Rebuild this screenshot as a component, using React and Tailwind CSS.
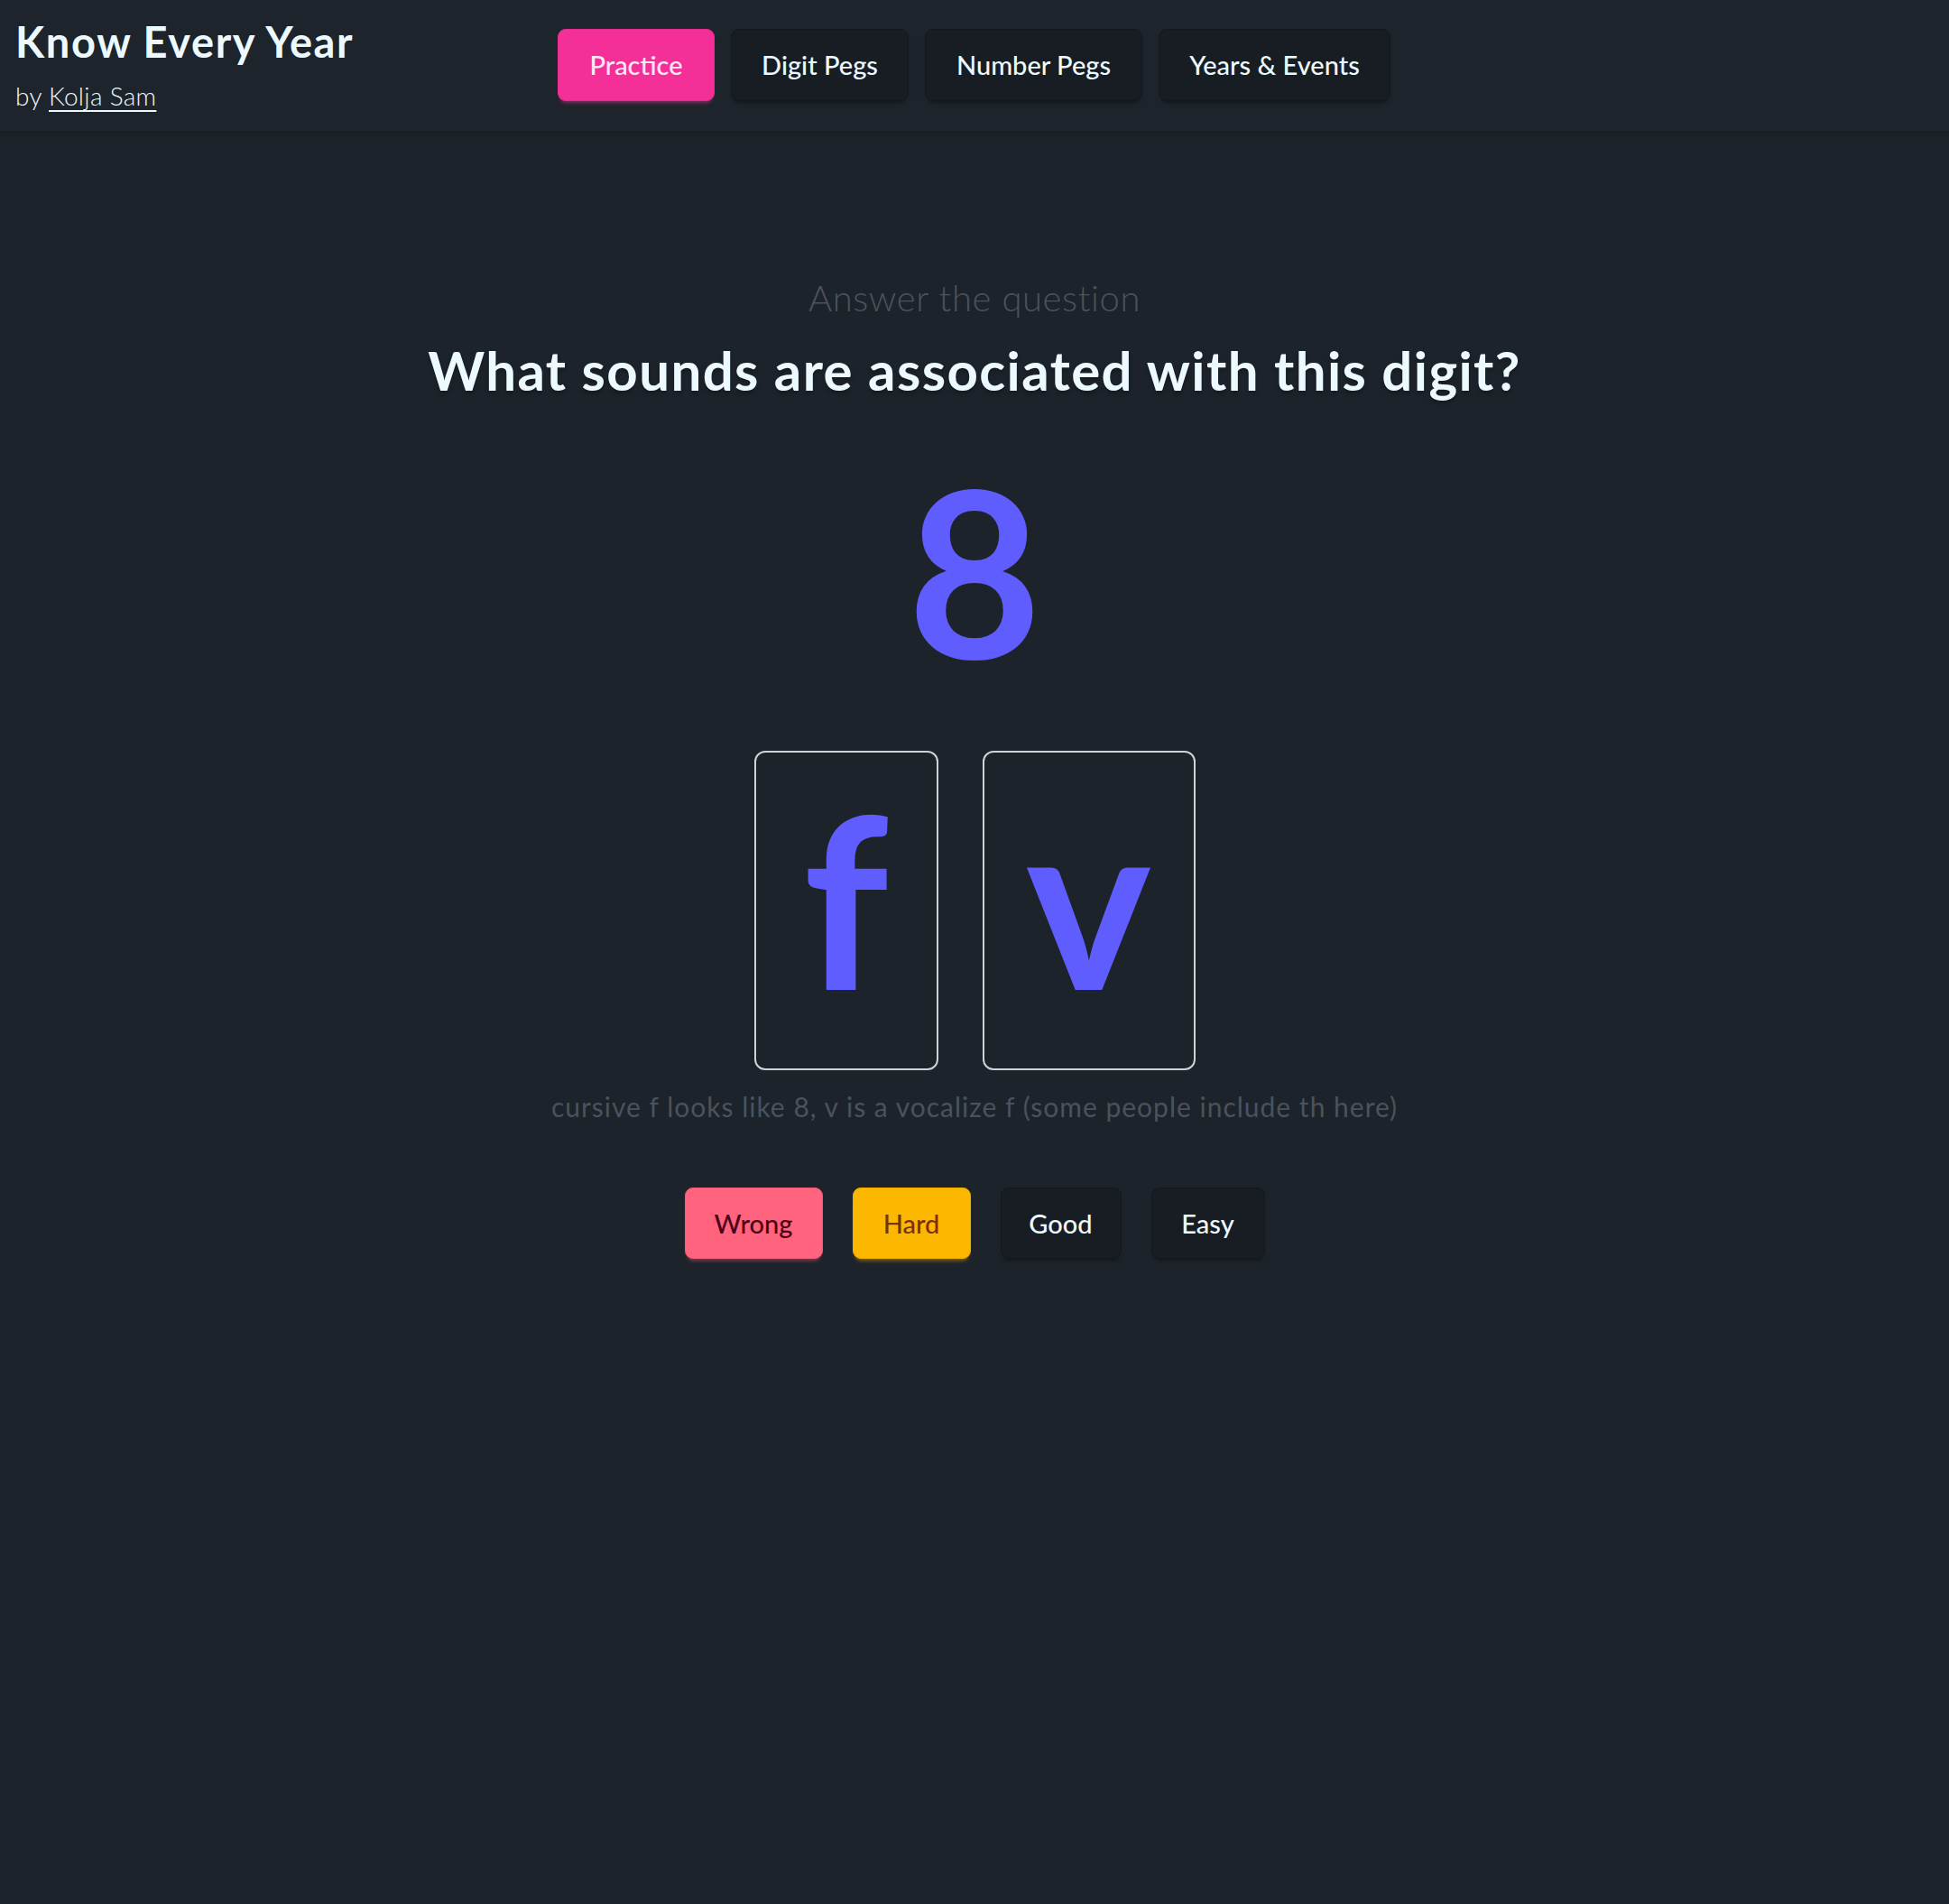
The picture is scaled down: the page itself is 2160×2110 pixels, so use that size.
import React from "react";

const navItems = [
  { label: "Practice", width: "w-[174px]", active: true },
  { label: "Digit Pegs", width: "w-[197px]" },
  { label: "Number Pegs", width: "w-[241px]" },
  { label: "Years & Events", width: "w-[257px]" },
];

const sounds = [
  { letter: "f", width: "w-[204px]" },
  { letter: "v", width: "w-[236px]" },
];

const ratings = [
  {
    label: "Wrong",
    className:
      "w-[153px] bg-[#ff637d] text-[#4d0218] border-[#f25e77] shadow-[0_5px_4px_-3px_rgba(255,99,125,0.45)]",
  },
  {
    label: "Hard",
    className:
      "w-[131px] bg-[#fcb700] text-[#793205] border-[#efae00] shadow-[0_5px_4px_-3px_rgba(252,183,0,0.45)]",
  },
  {
    label: "Good",
    className:
      "w-[134px] bg-[#181d23] text-[#ecf9ff] border-[#14181d] shadow-[0_5px_4px_-3px_rgba(0,0,0,0.35)]",
  },
  {
    label: "Easy",
    className:
      "w-[126px] bg-[#181d23] text-[#ecf9ff] border-[#14181d] shadow-[0_5px_4px_-3px_rgba(0,0,0,0.35)]",
  },
];

const App = () => {
  return (
    <div className="min-h-[2110px] bg-[#1d232a] text-[#ecf9ff] font-['Lato','Liberation_Sans',sans-serif]">
      <header className="h-[145px] flex items-start shadow-[0_3px_6px_rgba(0,0,0,0.18)] bg-[#1e242b]">
        <div className="w-[618px] pl-[17px] pt-[23px]">
          <h1 className="text-[47px] leading-none font-bold tracking-[1.6px]">Know Every Year</h1>
          <p className="mt-[22px] text-[28px] leading-none font-light tracking-[0.3px]">
            by{" "}
            <a href="#" className="underline underline-offset-[5px] decoration-[2px]">
              Kolja Sam
            </a>
          </p>
        </div>
        <nav className="flex gap-[18px] mt-[32px]">
          {navItems.map((item) => (
            <button
              key={item.label}
              className={
                item.active
                  ? `${item.width} h-[80px] rounded-[9px] bg-[#f43098] text-[#fde8f3] text-[29px] font-medium border border-[#e82d90] shadow-[0_5px_4px_-3px_rgba(244,48,152,0.5)]`
                  : `${item.width} h-[80px] rounded-[9px] bg-[#181d23] text-[#ecf9ff] text-[29px] font-medium border border-[#14181d] shadow-[0_5px_4px_-3px_rgba(0,0,0,0.35)]`
              }
            >
              {item.label}
            </button>
          ))}
        </nav>
      </header>

      <main className="flex flex-col items-center">
        <p className="mt-[165px] text-[40px] leading-none font-light tracking-[0.6px] text-[#4b535d]">
          Answer the question
        </p>
        <h2 className="mt-[30px] text-[60px] leading-none font-bold tracking-[1.4px] drop-shadow-[0_3px_2px_rgba(0,0,0,0.25)]">
          What sounds are associated with this digit?
        </h2>

        <div className="mt-[63px] text-[256px] leading-none font-bold text-[#605dff]">8</div>

        <div className="mt-[73px] flex gap-[49px]">
          {sounds.map((s) => (
            <div
              key={s.letter}
              className={`${s.width} h-[354px] rounded-[12px] border-2 border-[#cfd3d8] flex justify-center pt-[29px]`}
            >
              <span className="text-[264px] leading-none font-bold text-[#605dff]">{s.letter}</span>
            </div>
          ))}
        </div>

        <p className="mt-[25px] text-[30px] leading-none font-normal tracking-[1px] text-[#4a525c]">
          cursive f looks like 8, v is a vocalize f (some people include th here)
        </p>

        <div className="mt-[75px] flex gap-[33px]">
          {ratings.map((r) => (
            <button
              key={r.label}
              className={`${r.className} h-[79px] rounded-[9px] border text-[29px] font-medium`}
            >
              {r.label}
            </button>
          ))}
        </div>
      </main>
    </div>
  );
};

export default App;
